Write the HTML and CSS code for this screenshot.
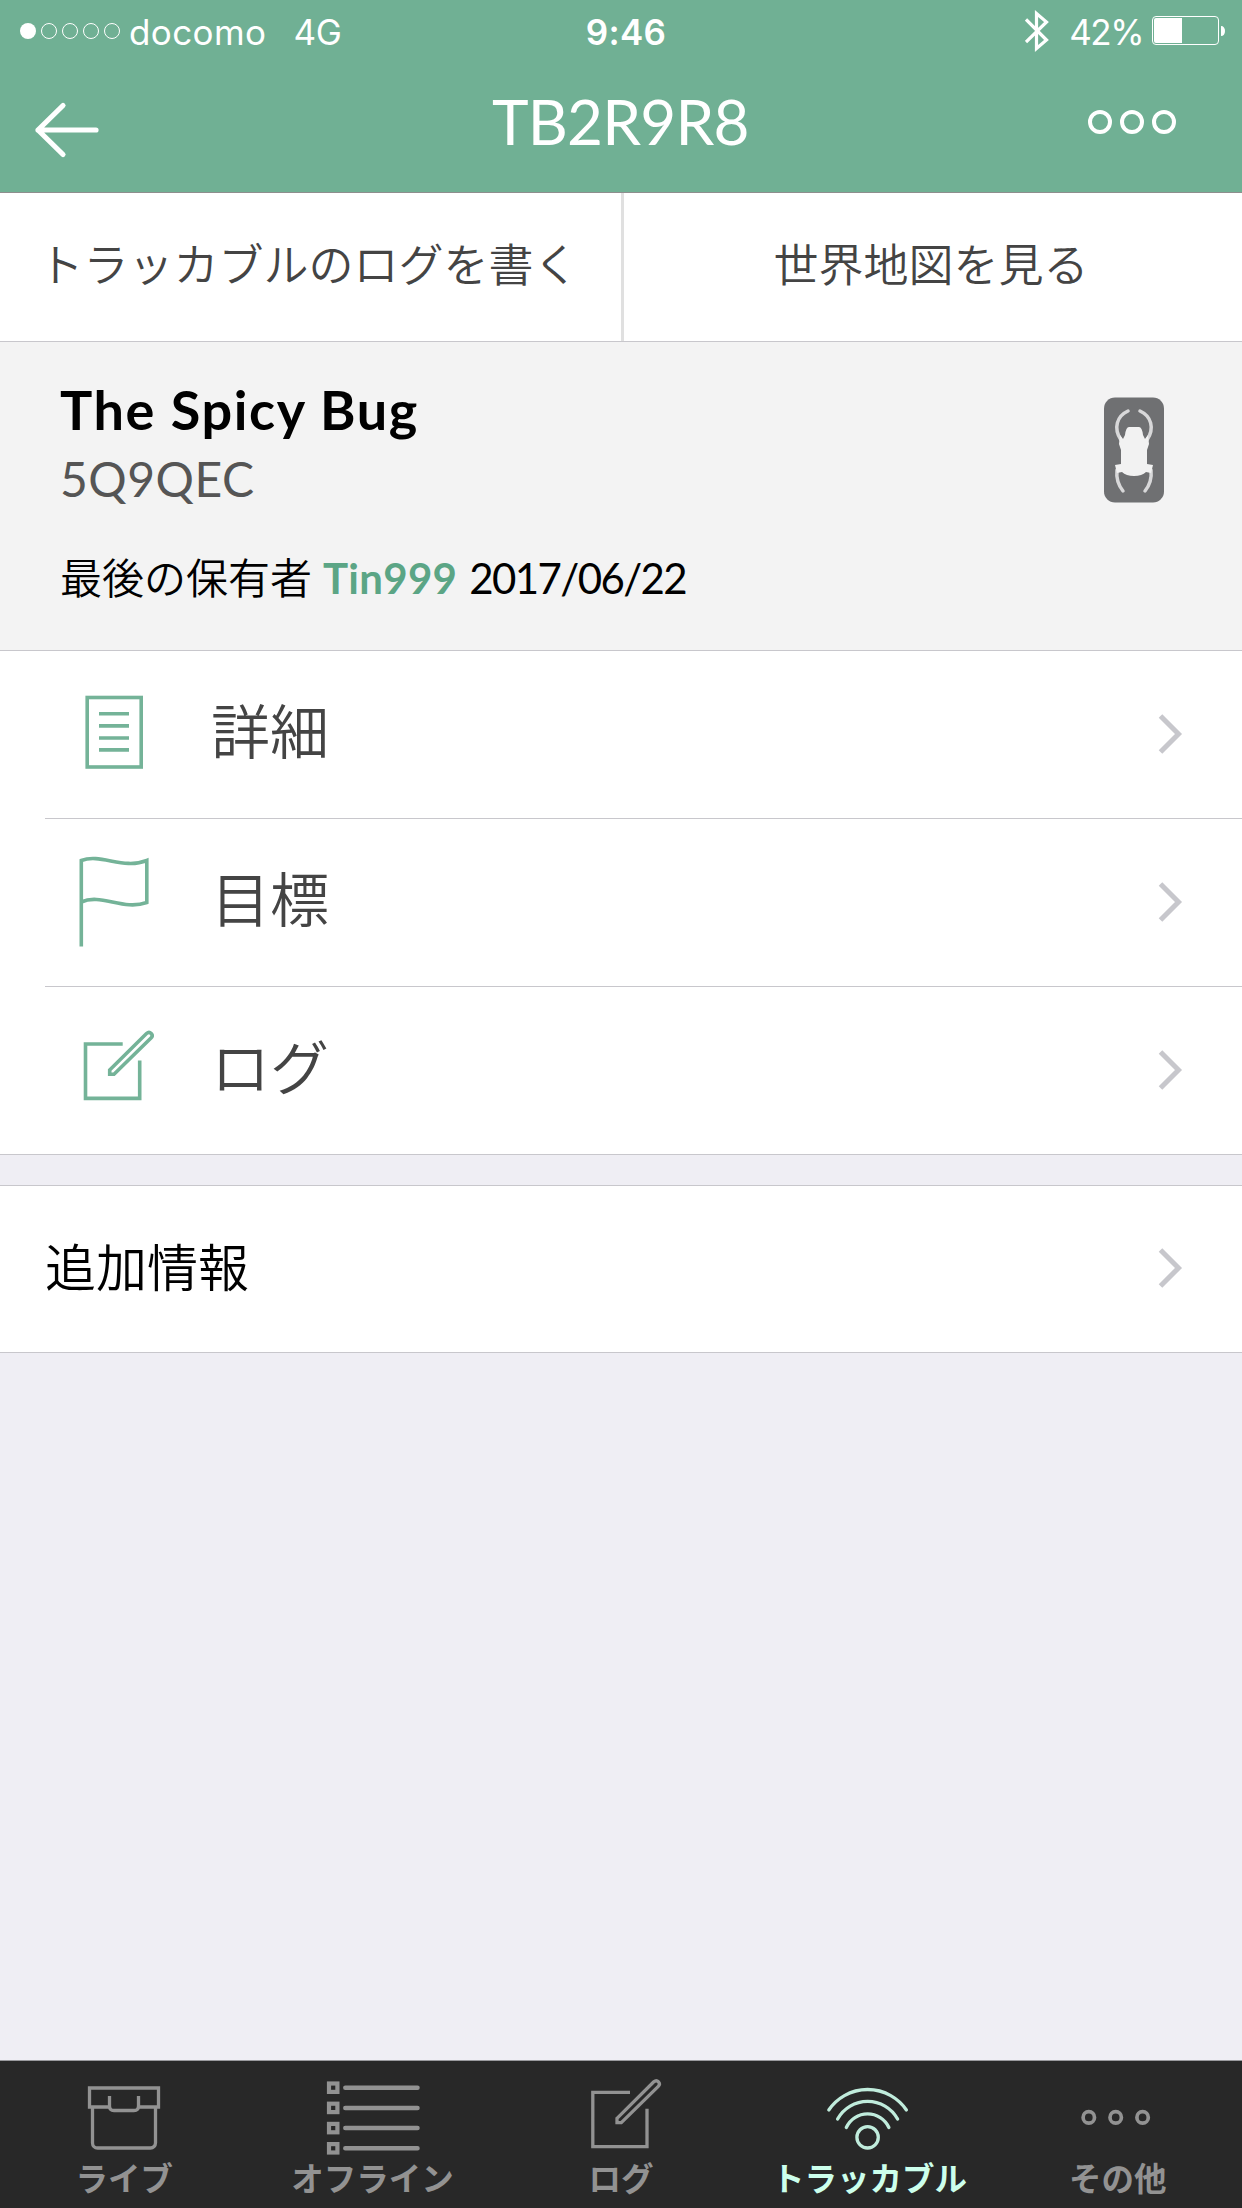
FILE: index.html
```html
<!DOCTYPE html>
<html lang="ja">
<head>
<meta charset="utf-8">
<title>TB2R9R8</title>
<link rel="stylesheet" href="styles.css">
</head>
<body>
<div class="app">
  <header class="header">
    <div class="status">
      <div class="status-left">
        <svg class="signal" width="102" height="20" viewBox="0 0 102 20"><circle cx="9" cy="10" r="8" fill="#fff"/><g fill="none" stroke="#fff" stroke-width="1"><circle cx="30" cy="10" r="7.5"/><circle cx="51" cy="10" r="7.5"/><circle cx="72" cy="10" r="7.5"/><circle cx="93" cy="10" r="7.5"/></g></svg>
        <span class="carrier">docomo</span>
        <span class="network">4G</span>
      </div>
      <div class="clock">9:46</div>
      <div class="status-right">
        <svg width="24" height="42" viewBox="0 0 24 42" fill="none" stroke="#fff" stroke-width="3.2"><path d="M1 9.500L21.500 30L11.500 38.500V3.500L21.500 12L1 32"/></svg>
        <span class="percent">42%</span>
        <svg class="battery" width="74" height="30" viewBox="0 0 74 30"><rect x=".5" y=".5" width="66" height="28" rx="3.500" fill="none" stroke="#fff"/><path d="M4 2H30V27H4a2 2 0 0 1-2-2V4a2 2 0 0 1 2-2z" fill="#fff"/><path d="M69 10c2.500 0 4 2 4 5s-1.500 5-4 5z" fill="#fff"/></svg>
      </div>
    </div>
    <div class="nav">
      <svg class="back" width="66" height="58" viewBox="0 0 66 58" fill="none" stroke="#fff" stroke-width="5.200" stroke-linecap="round" stroke-linejoin="round"><path d="M62 29H4M29 4.500L4 29L29 53.500"/></svg>
      <h1 class="title">TB2R9R8</h1>
      <svg class="more" width="90" height="26" viewBox="0 0 90 26" fill="none" stroke="#fff" stroke-width="4"><circle cx="13" cy="13" r="10"/><circle cx="45" cy="13" r="10"/><circle cx="77" cy="13" r="10"/></svg>
    </div>
  </header>

  <nav class="actions">
    <a class="action">トラッカブルのログを書く</a>
    <a class="action">世界地図を見る</a>
  </nav>

  <section class="summary">
    <div>
      <h2 class="name">The Spicy Bug</h2>
      <div class="code">5Q9QEC</div>
      <div class="holder"><span>最後の保有者</span><b class="user">Tin999</b><span class="date">2017/06/22</span></div>
    </div>
    <svg class="bug" width="60" height="106" viewBox="0 0 60 106"><rect width="60" height="105" y=".5" rx="11" fill="#6f7072"/><g fill="none" stroke="#d8d8d9" stroke-width="3.500" stroke-linecap="round"><path d="M24 14C13 19 9 31 17 43"/><path d="M36 14C47 19 51 31 43 43"/><path d="M13 73C12 82 15 89 19 94"/><path d="M47 73C48 82 45 89 41 94"/></g><path d="M25 30H35Q38 30 39 38L41 42L44 38L45 47L43 53V67L49 68L47 76L42 75Q38 79 30 79Q22 79 18 75L13 76L11 68L17 67V53L15 47L16 38L19 42L21 38Q22 30 25 30Z" fill="#f2f2f2"/></svg>
  </section>

  <ul class="list">
    <li class="row">
      <svg class="icon" viewBox="0 0 76 97"><rect x="9.200" y="11.500" width="54" height="69.500"/><path d="M21 27.700H51M21 39.900H51M21 52H51M21 63.900H51"/></svg>
      <span class="label">詳細</span>
      <svg class="chevron" viewBox="0 0 26 42"><path d="M2.500 3L20.500 21L2.500 39"/></svg>
    </li>
    <li class="row">
      <svg class="icon" viewBox="0 0 76 97"><path d="M3.300 92.600V6.500C23 -1 45 16 68.800 6.500V48.500C45 57 23 39 3.300 48"/></svg>
      <span class="label">目標</span>
      <svg class="chevron" viewBox="0 0 26 42"><path d="M2.500 3L20.500 21L2.500 39"/></svg>
    </li>
    <li class="row">
      <svg class="icon" viewBox="0 0 76 97"><path d="M44.700 22H7.500V76.400H61.700V38.500M31.700 48L68.500 11.500C72 8.500 76 13 73 16L36 52.300H31.700Z"/></svg>
      <span class="label">ログ</span>
      <svg class="chevron" viewBox="0 0 26 42"><path d="M2.500 3L20.500 21L2.500 39"/></svg>
    </li>
  </ul>

  <div class="extra">
    <span>追加情報</span>
    <svg class="chevron" viewBox="0 0 26 42"><path d="M2.500 3L20.500 21L2.500 39"/></svg>
  </div>

  <nav class="tabs">
    <a class="tab">
      <svg viewBox="0 0 100 96"><path d="M35 46H15.500V27H84.500V46H65M18.500 46V82a5 5 0 0 0 5 5H76.500a5 5 0 0 0 5-5V46M35.500 35V45q0 4.500 4.500 4.500H60q4.500 0 4.500-4.500V35"/></svg>
      <span>ライブ</span>
    </a>
    <a class="tab">
      <svg viewBox="0 0 100 96"><g stroke-width="4.200"><rect x="6" y="22.500" width="8.400" height="8.400"/><rect x="6" y="42.700" width="8.400" height="8.400"/><rect x="6" y="62.900" width="8.400" height="8.400"/><rect x="6" y="83.100" width="8.400" height="8.400"/></g><path stroke-width="4.500" stroke-linecap="round" d="M22.300 26.700H94.500M22.300 46.900H94.500M22.300 67.100H94.500M22.300 87.300H94.500"/></svg>
      <span>オフライン</span>
    </a>
    <a class="tab">
      <svg viewBox="0 0 100 96"><path transform="translate(14.300 9.300)" d="M44.700 22H7.500V76.400H61.700V38.500M31.700 48L68.500 11.500C72 8.500 76 13 73 16L36 52.300H31.700Z"/></svg>
      <span>ログ</span>
    </a>
    <a class="tab active">
      <svg viewBox="0 0 100 96"><g stroke-linecap="round"><circle cx="48.600" cy="76.300" r="10.700"/><path d="M27.300 66.500A23.500 23.500 0 0 1 69.900 66.500M18.600 58A34.300 34.300 0 0 1 78.600 58M9.800 49A47 47 0 0 1 87.400 49"/></g></svg>
      <span>トラッカブル</span>
    </a>
    <a class="tab">
      <svg viewBox="0 0 100 96"><g stroke-width="3.700"><circle cx="20.800" cy="56.400" r="5.700"/><circle cx="47.700" cy="56.400" r="5.700"/><circle cx="74.600" cy="56.400" r="5.700"/></g></svg>
      <span>その他</span>
    </a>
  </nav>
</div>
</body>
</html>
```
FILE: styles.css
```css
* { box-sizing: border-box; }
body {
  margin: 0;
  background: #efeef4;
  font-family: "Noto Sans CJK JP", sans-serif;
  color: #000;
}
svg { display: block; flex: none; }
.app {
  width: 1242px;
  height: 2208px;
  display: flex;
  flex-direction: column;
}

.header {
  height: 193px;
  background: #70b094;
  border-bottom: 1px solid #8e8e8e;
  color: #fff;
}
.status {
  height: 60px;
  display: grid;
  grid-template-columns: 1fr auto 1fr;
  align-items: center;
  font-family: Inter, sans-serif;
  font-size: 35px;
  line-height: 60px;
}
.status-left { display: flex; align-items: center; padding-left: 19px; }
.carrier { margin-left: 8px; padding-top: 2px; letter-spacing: 0.4px; }
.network { margin-left: 27px; padding-top: 2px; letter-spacing: -0.3px; }
.clock { font-weight: 600; padding: 2px 0 0 10px; letter-spacing: 0.3px; }
.status-right { display: flex; align-items: center; justify-content: flex-end; padding-right: 16px; }
.percent { margin: 0 9px 0 20px; padding-top: 2px; letter-spacing: -1.5px; }

.nav {
  height: 132px;
  padding: 0 65px 0 34px;
  display: grid;
  grid-template-columns: 458px auto 1fr;
}
.back { margin-top: 41px; }
.title {
  margin: 21px 0 0;
  font: 400 62px/80px Lato, sans-serif;
  letter-spacing: -0.8px;
}
.more { margin-top: 49px; justify-self: end; }

.actions {
  height: 149px;
  display: grid;
  grid-template-columns: 624px 1fr;
  background: #fff;
  border-bottom: 1px solid #c8c7cc;
}
.action {
  padding: 0 4px 10px 0;
  display: flex;
  align-items: center;
  justify-content: center;
  font-size: 45px;
  font-weight: 350;
  color: #444;
}
.action:first-child { border-right: 3px solid #e0e0e0; }

.summary {
  height: 309px;
  padding: 0 78px 0 60px;
  display: flex;
  justify-content: space-between;
  background: #f3f3f3;
  border-bottom: 1px solid #c8c7cc;
}
.name { margin: 34px 0 0; font: 700 54px/68px Lato, sans-serif; letter-spacing: 1.6px; }
.code { margin-top: 3px; font: 400 48px/64px Lato, sans-serif; color: #555; letter-spacing: 0.5px; }
.holder { margin-top: 35px; display: flex; align-items: baseline; font-size: 42px; line-height: 60px; font-weight: 350; }
.user { margin-left: 11px; font-family: Lato, sans-serif; color: #5ba585; letter-spacing: 0.3px; }
.date { margin-left: 12px; font-family: Lato, sans-serif; font-weight: 400; letter-spacing: -1.6px; }
.bug { margin-top: 55px; }

.list { margin: 0; padding: 0 0 0 45px; list-style: none; background: #fff; border-bottom: 1px solid #c8c7cc; }
.row { height: 168px; padding: 0 58px 0 33px; display: flex; align-items: center; border-bottom: 1px solid #c8c7cc; }
.row:last-child { height: 167px; border-bottom: 0; }
.icon { width: 76px; height: 97px; fill: none; stroke: #74b398; stroke-width: 3.6; }
.label { margin: 0 auto 12px 57px; font-size: 59px; line-height: 80px; font-weight: 350; color: #444; }
.chevron { width: 26px; height: 42px; margin-bottom: 2px; fill: none; stroke: #c7c7cc; stroke-width: 5; }

.extra {
  height: 168px;
  margin-top: 30px;
  padding: 0 58px 0 45px;
  display: flex;
  align-items: center;
  justify-content: space-between;
  background: #fff;
  border: solid #c8c7cc;
  border-width: 1px 0;
  font-size: 51px;
  font-weight: 350;
}
.extra span { margin-bottom: 8px; line-height: 80px; }

.tabs {
  height: 148px;
  margin-top: auto;
  display: grid;
  grid-template-columns: repeat(5, 1fr);
  background: #282828;
  border-top: 1px solid #9a9a9e;
  color: #929292;
}
.tab { display: flex; flex-direction: column; align-items: center; font-size: 32.5px; font-weight: 600; line-height: 40px; white-space: nowrap; }
.tab svg { width: 100px; height: 96px; fill: none; stroke: #929292; stroke-width: 3.3; }
.tab.active { color: #ccffec; }
.tab.active svg { stroke: #c0ecdc; }
```
